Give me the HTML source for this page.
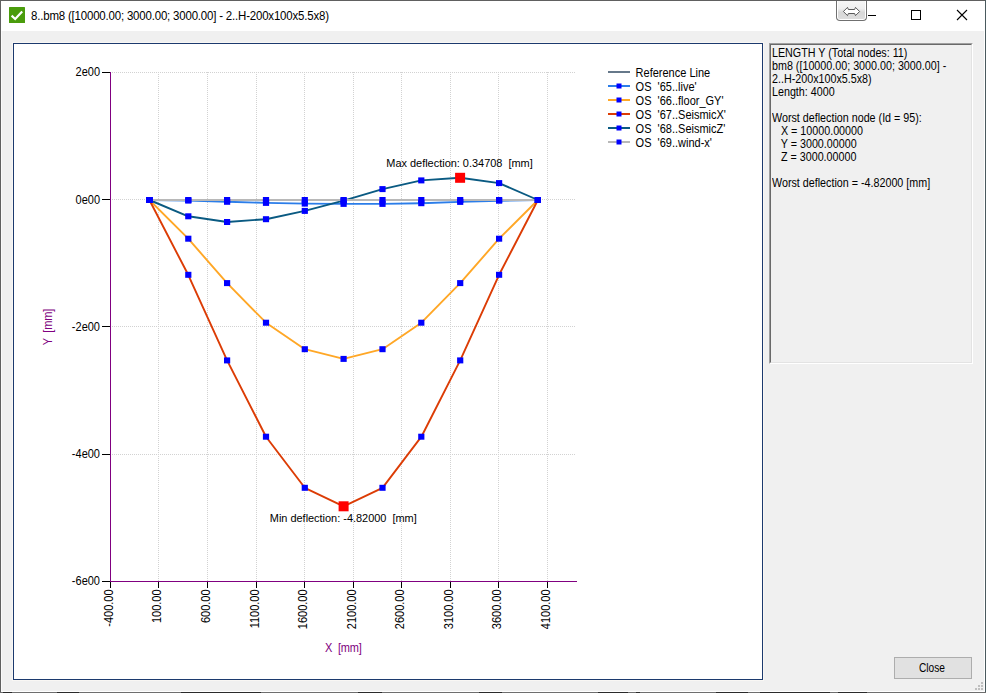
<!DOCTYPE html>
<html><head><meta charset="utf-8"><title>8..bm8</title>
<style>
html,body{margin:0;padding:0;}
body{width:986px;height:693px;overflow:hidden;background:#f0f0f0;position:relative;font-family:"Liberation Sans",Arial,sans-serif;font-size:11px;color:#000;}
.abs{position:absolute;}
#titlebar{left:1px;top:1px;width:984px;height:30px;background:#fff;}
#title{left:30.5px;top:9px;font-size:12.5px;line-height:14px;letter-spacing:-0.2px;transform:scaleX(0.917);transform-origin:0 0;white-space:pre;}
#icon{left:9px;top:7px;width:16px;height:16px;}
#chartpanel{left:13px;top:43px;width:748px;height:635px;border:1px solid #1c3a6e;background:#fff;box-shadow:0 0 0 1px #f9f7f4;}
#info{left:769px;top:43px;width:202px;height:319px;border-style:solid;border-width:1px;border-color:#a0a0a0 #fff #fff #a0a0a0;box-sizing:content-box;}
#info2{left:770px;top:44px;width:200px;height:317px;border-style:solid;border-width:1px;border-color:#696969 #e3e3e3 #e3e3e3 #696969;}
#infotext{left:772px;top:47px;line-height:13px;font-size:12.4px;transform:scaleX(0.866);transform-origin:0 0;white-space:pre;}
#close{left:894px;top:657px;width:76px;height:20px;border:1px solid #adadad;background:#e1e1e1;}
#closet{left:918.7px;top:661px;line-height:14px;font-size:12.4px;transform:scaleX(0.82);transform-origin:0 0;}
#swap{left:836px;top:1px;width:29px;height:19px;border:1px solid #707070;border-top:none;border-radius:0 0 4px 4px;background:linear-gradient(#f6f6f6 0%,#efefef 40%,#d8d8d8 60%,#dedede 100%);box-shadow:inset 1px 0 0 #fff,inset -1px 0 0 #fff,inset 0 -1px 0 #fff;}
</style></head><body>
<div class="abs" style="left:0;top:0;width:986px;height:1px;background:#606060"></div>
<div class="abs" style="left:0;top:0;width:1px;height:693px;background:#606060"></div>
<div class="abs" style="left:985px;top:0;width:1px;height:693px;background:#4a5a5e"></div>
<div class="abs" style="left:1px;top:691px;width:984px;height:1px;background:#fff"></div>
<div class="abs" style="left:984px;top:31px;width:1px;height:661px;background:#fff"></div>
<div class="abs" style="left:1px;top:31px;width:1px;height:661px;background:#fafafa"></div>
<div class="abs" style="left:0;top:692px;width:986px;height:1px;background:#6e6e6e"></div><div class="abs" style="left:3px;top:692px;width:9px;height:1px;background:#2a2a2a"></div><div class="abs" style="left:57px;top:692px;width:22px;height:1px;background:#2a2a2a"></div><div class="abs" style="left:181px;top:692px;width:80px;height:1px;background:#2a2a2a"></div><div class="abs" style="left:358px;top:692px;width:24px;height:1px;background:#2a2a2a"></div><div class="abs" style="left:479px;top:692px;width:23px;height:1px;background:#2a2a2a"></div><div class="abs" style="left:598px;top:692px;width:30px;height:1px;background:#2a2a2a"></div><div class="abs" style="left:636px;top:692px;width:4px;height:1px;background:#2a2a2a"></div><div class="abs" style="left:716px;top:692px;width:32px;height:1px;background:#2a2a2a"></div><div class="abs" style="left:760px;top:692px;width:70px;height:1px;background:#2a2a2a"></div><div class="abs" style="left:838px;top:692px;width:29px;height:1px;background:#2a2a2a"></div>
<div class="abs" id="titlebar"></div>
<svg class="abs" id="icon" viewBox="0 0 16 16"><rect width="16" height="16" rx="0.5" fill="#4a9c0c"/><path d="M2.6 8.6 L6.2 12 L13.2 4.6" fill="none" stroke="#fff" stroke-width="2.2"/></svg>
<div class="abs" id="title">8..bm8 ([10000.00; 3000.00; 3000.00] - 2..H-200x100x5.5x8)</div>
<div class="abs" id="swap"></div>
<svg class="abs" style="left:0;top:0" width="986" height="32" viewBox="0 0 986 32">
<path d="M843.4 11.5 L847.5 7.4 L848.4 9.5 L854.6 9.5 L855.5 7.4 L859.6 11.5 L855.5 15.6 L854.6 13.5 L848.4 13.5 L847.5 15.6 Z" fill="#fff" stroke="#4a4a4a" stroke-width="0.9" stroke-linejoin="miter"/>
<g shape-rendering="crispEdges"><rect x="868" y="15" width="8" height="1" fill="#000"/>
<rect x="911.5" y="10.5" width="9" height="9" fill="none" stroke="#000" stroke-width="1"/></g>
<path d="M957 10 L967 20 M967 10 L957 20" stroke="#000" stroke-width="1.1" fill="none"/>
</svg>
<div class="abs" id="chartpanel"></div>
<div class="abs" id="info"></div>
<div class="abs" id="info2"></div>
<div class="abs" id="infotext">LENGTH Y (Total nodes: 11)
bm8 ([10000.00; 3000.00; 3000.00] -
2..H-200x100x5.5x8)
Length: 4000

Worst deflection node (Id = 95):
   X = 10000.00000
   Y = 3000.00000
   Z = 3000.00000

Worst deflection = -4.82000 [mm]</div>
<div class="abs" id="close"></div><div class="abs" id="closet">Close</div>
<svg class="abs" style="left:974px;top:681px" width="10" height="10" viewBox="0 0 10 10" shape-rendering="crispEdges"><g fill="#bfbfbf"><rect x="7" y="1" width="2" height="2"/><rect x="4" y="4" width="2" height="2"/><rect x="7" y="4" width="2" height="2"/><rect x="1" y="7" width="2" height="2"/><rect x="4" y="7" width="2" height="2"/><rect x="7" y="7" width="2" height="2"/></g></svg>
<div class="abs" style="left:0;top:0;width:986px;height:693px">
<svg id="chart" width="986" height="693" viewBox="0 0 986 693">
<g stroke="#d2d2d2" stroke-width="1" stroke-dasharray="1 1" shape-rendering="crispEdges">
<line x1="158.5" y1="72" x2="158.5" y2="581"/>
<line x1="207.5" y1="72" x2="207.5" y2="581"/>
<line x1="256.5" y1="72" x2="256.5" y2="581"/>
<line x1="304.5" y1="72" x2="304.5" y2="581"/>
<line x1="353.5" y1="72" x2="353.5" y2="581"/>
<line x1="401.5" y1="72" x2="401.5" y2="581"/>
<line x1="450.5" y1="72" x2="450.5" y2="581"/>
<line x1="498.5" y1="72" x2="498.5" y2="581"/>
<line x1="547.5" y1="72" x2="547.5" y2="581"/>
<line x1="112" y1="72.5" x2="576" y2="72.5"/>
<line x1="112" y1="199.5" x2="576" y2="199.5"/>
<line x1="112" y1="326.5" x2="576" y2="326.5"/>
<line x1="112" y1="454.5" x2="576" y2="454.5"/>
</g>
<g shape-rendering="crispEdges">
<rect x="110" y="72" width="1" height="510" fill="#800080"/>
<rect x="110" y="581" width="467" height="1" fill="#800080"/>
<rect x="102" y="72" width="8" height="1" fill="#000"/>
<rect x="102" y="199" width="8" height="1" fill="#000"/>
<rect x="102" y="326" width="8" height="1" fill="#000"/>
<rect x="102" y="454" width="8" height="1" fill="#000"/>
<rect x="102" y="581" width="8" height="1" fill="#000"/>
<rect x="110" y="582" width="1" height="6" fill="#000"/>
<rect x="158" y="582" width="1" height="6" fill="#000"/>
<rect x="207" y="582" width="1" height="6" fill="#000"/>
<rect x="256" y="582" width="1" height="6" fill="#000"/>
<rect x="304" y="582" width="1" height="6" fill="#000"/>
<rect x="353" y="582" width="1" height="6" fill="#000"/>
<rect x="401" y="582" width="1" height="6" fill="#000"/>
<rect x="450" y="582" width="1" height="6" fill="#000"/>
<rect x="498" y="582" width="1" height="6" fill="#000"/>
<rect x="547" y="582" width="1" height="6" fill="#000"/>
</g>
<g font-family="'Liberation Sans',Arial,sans-serif" font-size="12.4" fill="#000">
<text transform="translate(100,76) scale(0.887,1)" text-anchor="end" xml:space="preserve">2e00</text>
<text transform="translate(100,204) scale(0.887,1)" text-anchor="end" xml:space="preserve">0e00</text>
<text transform="translate(100,331) scale(0.887,1)" text-anchor="end" xml:space="preserve">-2e00</text>
<text transform="translate(100,458) scale(0.887,1)" text-anchor="end" xml:space="preserve">-4e00</text>
<text transform="translate(100,585) scale(0.887,1)" text-anchor="end" xml:space="preserve">-6e00</text>
<text transform="translate(113.1,589.4) rotate(-90) scale(0.887,1)" text-anchor="end" xml:space="preserve">-400.00</text>
<text transform="translate(161.1,589.4) rotate(-90) scale(0.887,1)" text-anchor="end" xml:space="preserve">100.00</text>
<text transform="translate(210.1,589.4) rotate(-90) scale(0.887,1)" text-anchor="end" xml:space="preserve">600.00</text>
<text transform="translate(259.1,589.4) rotate(-90) scale(0.887,1)" text-anchor="end" xml:space="preserve">1100.00</text>
<text transform="translate(307.1,589.4) rotate(-90) scale(0.887,1)" text-anchor="end" xml:space="preserve">1600.00</text>
<text transform="translate(356.1,589.4) rotate(-90) scale(0.887,1)" text-anchor="end" xml:space="preserve">2100.00</text>
<text transform="translate(404.1,589.4) rotate(-90) scale(0.887,1)" text-anchor="end" xml:space="preserve">2600.00</text>
<text transform="translate(453.1,589.4) rotate(-90) scale(0.887,1)" text-anchor="end" xml:space="preserve">3100.00</text>
<text transform="translate(501.1,589.4) rotate(-90) scale(0.887,1)" text-anchor="end" xml:space="preserve">3600.00</text>
<text transform="translate(550.1,589.4) rotate(-90) scale(0.887,1)" text-anchor="end" xml:space="preserve">4100.00</text>
<g font-size="11.8">
<text transform="translate(386.3,167.1) scale(0.93,1)" textLength="157.53" lengthAdjust="spacing" xml:space="preserve">Max deflection: 0.34708  [mm]</text>
<text transform="translate(269.8,522.1) scale(0.93,1)" textLength="158.06" lengthAdjust="spacing" xml:space="preserve">Min deflection: -4.82000  [mm]</text>
</g>
<text transform="translate(325,652) scale(0.887,1)" fill="#800080" textLength="41.49" lengthAdjust="spacing" xml:space="preserve">X  [mm]</text>
<text transform="translate(52,345.3) rotate(-90) scale(0.887,1)" fill="#800080" textLength="41.15" lengthAdjust="spacing" xml:space="preserve">Y  [mm]</text>
<rect x="608" y="71" width="22" height="2" fill="#66788a" shape-rendering="crispEdges"/>
<text transform="translate(635.6,76.7) scale(0.887,1)" xml:space="preserve">Reference Line</text>
<rect x="608" y="85" width="22" height="2" fill="#2b7de9" shape-rendering="crispEdges"/>
<rect x="616.5" y="83.5" width="5" height="5" fill="#0000ff"/>
<text transform="translate(635.6,90.7) scale(0.887,1)" xml:space="preserve">OS  '65..live'</text>
<rect x="608" y="99" width="22" height="2" fill="#ffa726" shape-rendering="crispEdges"/>
<rect x="616.5" y="97.5" width="5" height="5" fill="#0000ff"/>
<text transform="translate(635.6,104.7) scale(0.887,1)" xml:space="preserve">OS  '66..floor_GY'</text>
<rect x="608" y="113" width="22" height="2" fill="#dc3c05" shape-rendering="crispEdges"/>
<rect x="616.5" y="111.5" width="5" height="5" fill="#0000ff"/>
<text transform="translate(635.6,118.7) scale(0.887,1)" xml:space="preserve">OS  '67..SeismicX'</text>
<rect x="608" y="127" width="22" height="2" fill="#0a5a82" shape-rendering="crispEdges"/>
<rect x="616.5" y="125.5" width="5" height="5" fill="#0000ff"/>
<text transform="translate(635.6,132.7) scale(0.887,1)" xml:space="preserve">OS  '68..SeismicZ'</text>
<rect x="608" y="141" width="22" height="2" fill="#b8b8b8" shape-rendering="crispEdges"/>
<rect x="616.5" y="139.5" width="5" height="5" fill="#0000ff"/>
<text transform="translate(635.6,146.7) scale(0.887,1)" xml:space="preserve">OS  '69..wind-x'</text>
</g>
<line x1="149.4" y1="200" x2="537.9" y2="200" stroke="#66788a" stroke-width="1.2"/>
<polyline points="149.4,200.0 188.2,200.6 227.1,201.8 266.0,202.9 304.8,203.6 343.6,203.9 382.5,203.9 421.4,203.2 460.2,201.9 499.1,200.7 537.9,200.0" fill="none" stroke="#2b7de9" stroke-width="1.9" stroke-linejoin="round"/>
<polyline points="149.4,200.0 188.2,238.7 227.1,283.1 266.0,322.7 304.8,349.2 343.6,358.9 382.5,349.2 421.4,322.7 460.2,283.1 499.1,238.7 537.9,200.0" fill="none" stroke="#ffa726" stroke-width="1.9" stroke-linejoin="round"/>
<polyline points="149.4,200.0 188.2,274.8 227.1,360.4 266.0,436.7 304.8,487.8 343.6,506.3 382.5,487.8 421.4,436.7 460.2,360.4 499.1,274.8 537.9,200.0" fill="none" stroke="#dc3c05" stroke-width="1.9" stroke-linejoin="round"/>
<polyline points="149.4,200.0 188.2,216.3 227.1,222.0 266.0,219.2 304.8,210.9 343.6,200.7 382.5,189.1 421.4,180.4 460.2,177.8 499.1,183.1 537.9,200.0" fill="none" stroke="#0a5a82" stroke-width="1.9" stroke-linejoin="round"/>
<polyline points="149.4,200.0 188.2,200.0 227.1,200.0 266.0,200.0 304.8,200.0 343.6,200.0 382.5,200.0 421.4,200.0 460.2,200.0 499.1,200.0 537.9,200.0" fill="none" stroke="#b8b8b8" stroke-width="2" stroke-linejoin="round"/>
<g fill="#0000ff">
<rect x="146.3" y="197.0" width="6.2" height="6"/><rect x="185.2" y="197.6" width="6.2" height="6"/><rect x="224.0" y="198.8" width="6.2" height="6"/><rect x="262.9" y="199.9" width="6.2" height="6"/><rect x="301.7" y="200.6" width="6.2" height="6"/><rect x="340.5" y="200.9" width="6.2" height="6"/><rect x="379.4" y="200.9" width="6.2" height="6"/><rect x="418.2" y="200.2" width="6.2" height="6"/><rect x="457.1" y="198.9" width="6.2" height="6"/><rect x="496.0" y="197.7" width="6.2" height="6"/><rect x="534.8" y="197.0" width="6.2" height="6"/><rect x="146.3" y="197.0" width="6.2" height="6"/><rect x="185.2" y="235.7" width="6.2" height="6"/><rect x="224.0" y="280.1" width="6.2" height="6"/><rect x="262.9" y="319.7" width="6.2" height="6"/><rect x="301.7" y="346.2" width="6.2" height="6"/><rect x="340.5" y="355.9" width="6.2" height="6"/><rect x="379.4" y="346.2" width="6.2" height="6"/><rect x="418.2" y="319.7" width="6.2" height="6"/><rect x="457.1" y="280.1" width="6.2" height="6"/><rect x="496.0" y="235.7" width="6.2" height="6"/><rect x="534.8" y="197.0" width="6.2" height="6"/><rect x="146.3" y="197.0" width="6.2" height="6"/><rect x="185.2" y="271.8" width="6.2" height="6"/><rect x="224.0" y="357.4" width="6.2" height="6"/><rect x="262.9" y="433.7" width="6.2" height="6"/><rect x="301.7" y="484.8" width="6.2" height="6"/><rect x="379.4" y="484.8" width="6.2" height="6"/><rect x="418.2" y="433.7" width="6.2" height="6"/><rect x="457.1" y="357.4" width="6.2" height="6"/><rect x="496.0" y="271.8" width="6.2" height="6"/><rect x="534.8" y="197.0" width="6.2" height="6"/><rect x="146.3" y="197.0" width="6.2" height="6"/><rect x="185.2" y="213.3" width="6.2" height="6"/><rect x="224.0" y="219.0" width="6.2" height="6"/><rect x="262.9" y="216.2" width="6.2" height="6"/><rect x="301.7" y="207.9" width="6.2" height="6"/><rect x="340.5" y="197.7" width="6.2" height="6"/><rect x="379.4" y="186.1" width="6.2" height="6"/><rect x="418.2" y="177.4" width="6.2" height="6"/><rect x="496.0" y="180.1" width="6.2" height="6"/><rect x="534.8" y="197.0" width="6.2" height="6"/><rect x="146.3" y="197.0" width="6.2" height="6"/><rect x="185.2" y="197.0" width="6.2" height="6"/><rect x="224.0" y="197.0" width="6.2" height="6"/><rect x="262.9" y="197.0" width="6.2" height="6"/><rect x="301.7" y="197.0" width="6.2" height="6"/><rect x="340.5" y="197.0" width="6.2" height="6"/><rect x="379.4" y="197.0" width="6.2" height="6"/><rect x="418.2" y="197.0" width="6.2" height="6"/><rect x="457.1" y="197.0" width="6.2" height="6"/><rect x="496.0" y="197.0" width="6.2" height="6"/><rect x="534.8" y="197.0" width="6.2" height="6"/>
</g>
<g fill="#ff0000"><rect x="455.1" y="172.8" width="10" height="10"/><rect x="338.6" y="501.3" width="10" height="10"/></g>
</svg>
</div>
</body></html>
